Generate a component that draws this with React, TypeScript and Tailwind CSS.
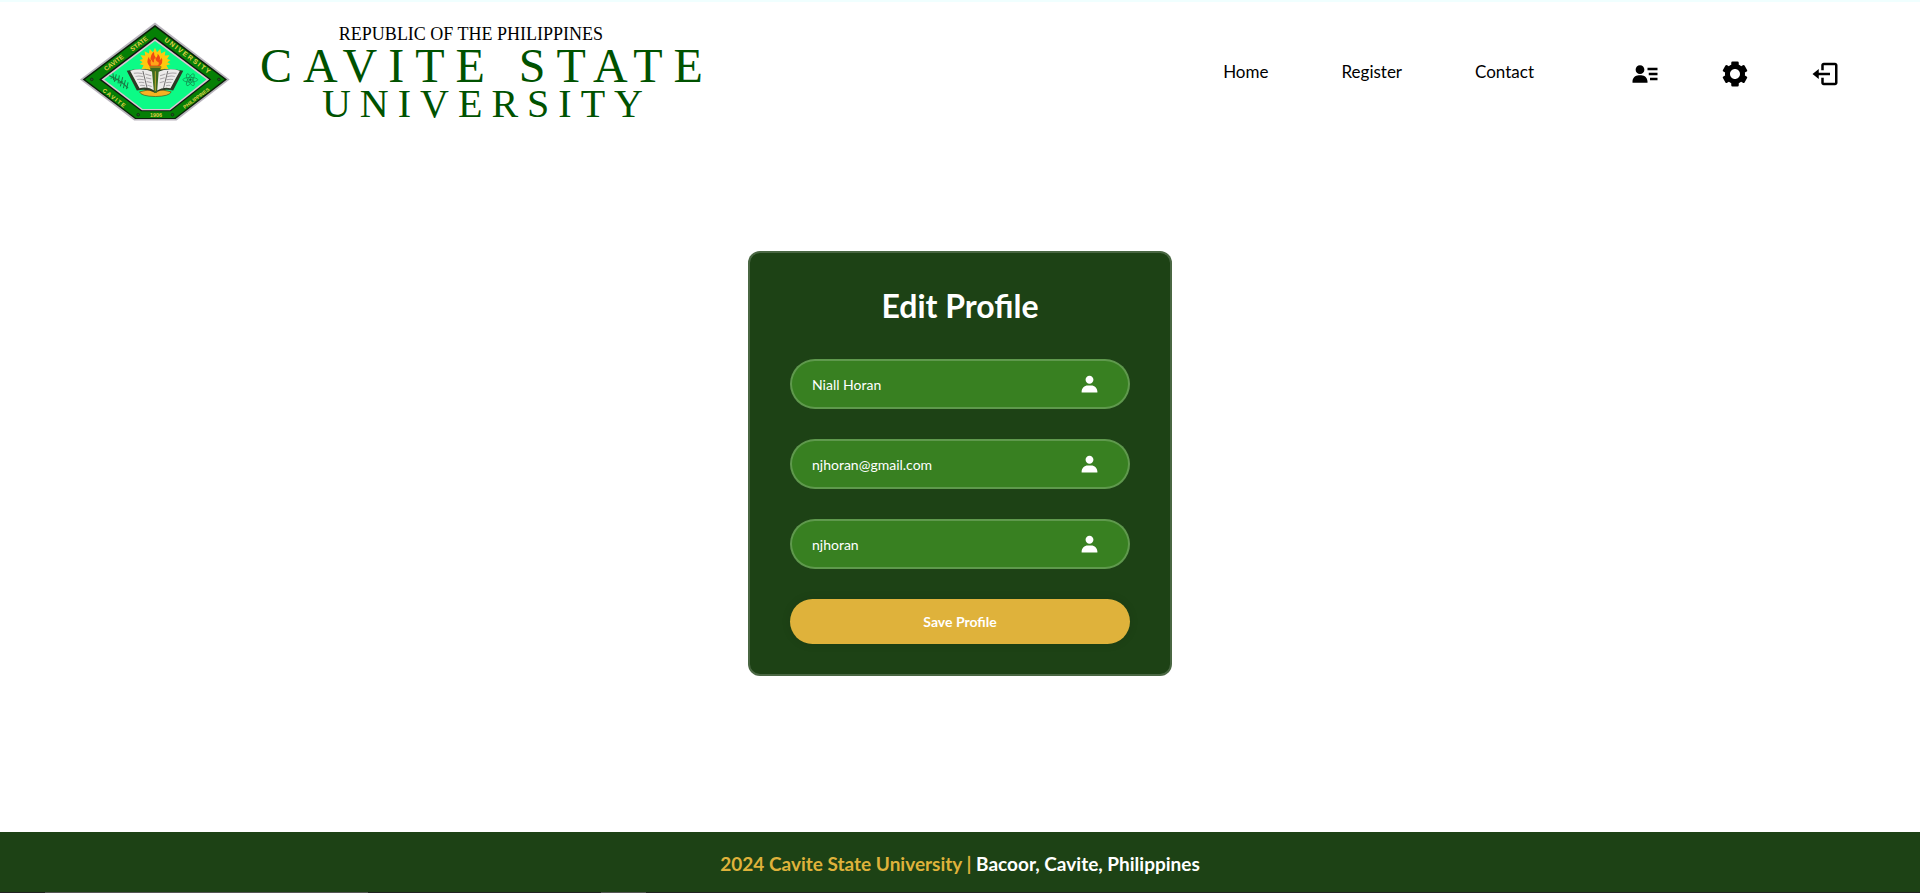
import { BiLogOut, BiSolidCog, BiSolidUser, BiSolidUserDetail } from "react-icons/bi";

function Seal() {
  return (
    <svg viewBox="31 36 446 293" className="h-[99px] w-[150px] shrink-0" role="img" aria-label="Cavite State University seal">
      <path d="M254 37 L476 206 L318 328 H192 L31 206 Z" fill="#b9b4bd" />
      <path d="M254 44 L468 206 L315 324 H195 L39 206 Z" fill="#0a1f08" />
      <path d="M254 50 L461 206 L313 321 H197 L46 206 Z" fill="#057f05" />
      <path d="M254 80 L421 206 L301 301 H213 L88 206 Z" fill="#111" />
      <path d="M254 86 L415 206 L299 298 H215 L95 206 Z" fill="#d8c8d0" />
      <path d="M254 92 L407 206 L297 294 H217 L103 206 Z" fill="#0cfb86" />
      <g fill="#e0cf4a" fontFamily="'Liberation Sans', Arial, sans-serif" fontWeight="700" textAnchor="middle">
        <text fontSize="19" transform="translate(122 164) rotate(-37)">
          <tspan x="12" y="6">CAVITE</tspan>
          <tspan x="106" y="6">STATE</tspan>
        </text>
        <text fontSize="20" letterSpacing="5" transform="translate(348 142) rotate(37)">UNIVERSITY</text>
        <text fontSize="17" letterSpacing="4" transform="translate(130 267) rotate(37)">CAVITE</text>
        <text fontSize="15" transform="translate(380 266) rotate(-37)">PHILIPPINES</text>
        <text fontSize="16" x="257" y="317">1906</text>
      </g>
      <g fill="#2b4f2b" stroke="#062f06" strokeWidth="2">
        <circle cx="66" cy="206" r="4" />
        <circle cx="444" cy="206" r="4" />
        <circle cx="204" cy="311" r="4" />
        <circle cx="306" cy="311" r="4" />
      </g>
      <path
        d="M254 112 l6 13 10-10 2 14 13-7-2 13 14-1-7 11 10 3-9 7 9 6-12 3 6 11-13-1 1 10-56 0 1-10-13 1 6-11-12-3 9-6-9-7 10-3-7-11 14 1-2-13 13 7 2-14 10 10z"
        fill="#ffc90e"
      />
      <path d="M238 168 q-12-15-2-29 q1 9 5 11 q-2-17 10-26 q-1 12 6 18 q6-4 5-12 q10 10 6 18 q5-2 6-7 q6 17-8 27z" fill="#ef4a12" />
      <path d="M243 165 q-5-10 1-18 q2 10 7 8 q-1-9 4-14 q2 14 9 13 q4 7-3 11z" fill="#ffa519" />
      <path d="M208 243 q46-14 94 0 q-4 13-47 14 q-43-1-47-14z" fill="#f5b223" stroke="#5c4c10" strokeWidth="2" />
      <path d="M170 180 l30 59 q30-7 54 7 q24-14 54-7 l30-59 q-49-11-84 1 q-35-12-84-1z" fill="#2c3b25" />
      <path d="M180 180 l28 52 q25-6 44 7 V184 q-37-14-72-4z M328 180 l-28 52 q-22-5-40 7 V184 q35-14 68-4z" fill="#ecebea" />
      <g stroke="#a9a6a8" strokeWidth="3" fill="none">
        <path d="M191 188 q14-3 26 1 M196 197 q12-3 23 1 M201 206 q10-2 20 1 M206 215 q9-2 16 1 M210 224 q7-1 14 1" />
        <path d="M225 190 l18 5 M227 201 l16 4 M229 212 l15 4 M231 223 l13 4" />
        <path d="M318 188 q-14-3-26 1 M313 197 q-12-3-23 1 M308 206 q-10-2-20 1 M303 215 q-9-2-16 1 M299 224 q-7-1-12 1" />
        <path d="M285 190 l-16 5 M283 201 l-14 4 M281 212 l-13 4" />
      </g>
      <path d="M218 181 l13 53 M292 181 l-13 53" stroke="#333" strokeWidth="2" />
      <path d="M239 168 h33 l-3 14 h-4 l-5 64 h-9 l-6-64 h-4z" fill="#3d6a1f" />
      <path d="M238 167 h35 v5 h-35z" fill="#a28418" />
      <path d="M255 182 v58" stroke="#b9a92e" strokeWidth="3" />
      <g stroke="#1b7a45" strokeWidth="3" fill="none">
        <path d="M118 195 q30 10 56 37" />
        <path d="M129 188 l2 20 M139 191 l-6 22 M148 194 l-4 24 M158 199 l-7 28 M166 208 l-6 24 M174 215 l-5 20" />
        <path d="M122 203 l10-4 M134 209 l12-5 M147 217 l12-4" />
      </g>
      <g stroke="#13834a" strokeWidth="2" fill="none">
        <ellipse cx="359" cy="207" rx="22" ry="7" />
        <ellipse cx="359" cy="207" rx="20" ry="7" transform="rotate(60 359 207)" />
        <ellipse cx="359" cy="207" rx="20" ry="7" transform="rotate(-60 359 207)" />
        <circle cx="359" cy="207" r="3" fill="#0b5a30" />
      </g>
    </svg>
  );
}

function Wordmark() {
  return (
    <div className="flex flex-col items-center whitespace-nowrap font-['Liberation_Serif',serif] text-[#005200]">
      <p className="pr-8 text-[18px] leading-[20px] text-black">REPUBLIC OF THE PHILIPPINES</p>
      <p className="text-[48px] leading-[44px] tracking-[11px]">CAVITE STATE</p>
      <p className="text-[40px] leading-[32px] tracking-[9px]">UNIVERSITY</p>
    </div>
  );
}

const links = ["Home", "Register", "Contact"];

const actions = [
  { label: "Profile", Icon: BiSolidUserDetail },
  { label: "Settings", Icon: BiSolidCog },
  { label: "Log out", Icon: BiLogOut },
];

const fields = [
  { id: "name", label: "Full name", type: "text", value: "Niall Horan" },
  { id: "email", label: "Email", type: "email", value: "njhoran@gmail.com" },
  { id: "username", label: "Username", type: "text", value: "njhoran" },
];

export default function App() {
  return (
    <div className="flex min-h-screen flex-col bg-white font-[Lato,sans-serif]">
      <header className="flex items-center justify-between border-t-2 border-[#f0ffff] px-20 py-5">
        <a href="#" className="flex items-center gap-[30px]">
          <Seal />
          <Wordmark />
        </a>
        <nav className="flex items-center gap-24">
          <ul className="flex items-center gap-[73px] text-[17px] leading-6 text-black">
            {links.map((link) => (
              <li key={link}>
                <a href="#">{link}</a>
              </li>
            ))}
          </ul>
          <ul className="flex items-center gap-[60px]">
            {actions.map(({ label, Icon }) => (
              <li key={label}>
                <a href="#" aria-label={label} className="block pt-1 text-black">
                  <Icon size={30} />
                </a>
              </li>
            ))}
          </ul>
        </nav>
      </header>

      <main className="flex flex-1 items-center justify-center pb-[46px]">
        <form className="w-full max-w-[424px] rounded-xl border-2 border-white/20 bg-[#1d4215] px-10 py-[30px] text-white">
          <h1 className="text-center text-[32px] leading-[46px] font-bold">Edit Profile</h1>
          {fields.map(({ id, label, type, value }) => (
            <div key={id} className="relative mt-[30px]">
              <input
                id={id}
                type={type}
                aria-label={label}
                defaultValue={value}
                className="block h-[50px] w-full rounded-full border-2 border-white/20 bg-[#388021] pr-12 pl-5 text-[14px] text-white outline-none"
              />
              <BiSolidUser size={21} className="absolute top-[15px] right-[30px]" />
            </div>
          ))}
          <button
            type="submit"
            className="mt-[30px] block h-[45px] w-full rounded-full bg-[#dfb23b] text-[14px] font-bold text-white shadow-[0_0_10px_rgba(0,0,0,0.1)]"
          >
            Save Profile
          </button>
        </form>
      </main>

      <footer className="bg-[#1d4215] text-center text-[19px] font-bold text-white">
        <p className="pt-1 leading-[56px]">
          <span className="text-[#dfb23b]">2024 Cavite State University |</span> Bacoor, Cavite, Philippines
        </p>
        <div className="flex h-px bg-[#222]">
          <span className="ml-[45px] w-[323px] bg-[#555]" />
          <span className="ml-[233px] w-[45px] bg-[#555]" />
        </div>
      </footer>
    </div>
  );
}
